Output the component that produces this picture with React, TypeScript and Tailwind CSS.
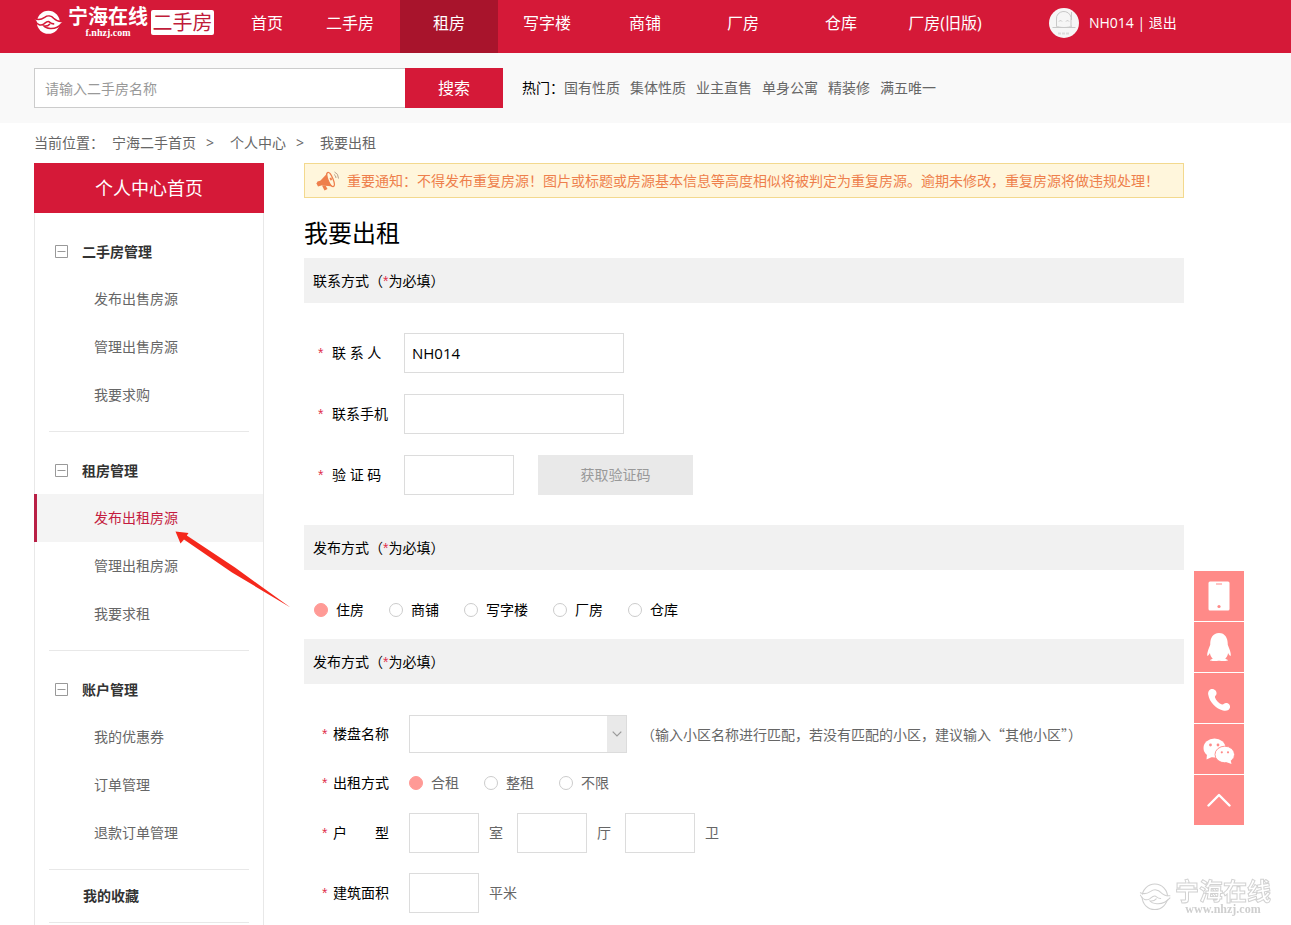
import { useState } from "react";
import type { ReactNode } from "react";
import { FaQq } from "react-icons/fa";

const NAV = [
  { label: "首页", width: "w-[66px]" },
  { label: "二手房", width: "w-[100px]" },
  { label: "租房", width: "w-[98px]", active: true },
  { label: "写字楼", width: "w-[98px]" },
  { label: "商铺", width: "w-[98px]" },
  { label: "厂房", width: "w-[98px]" },
  { label: "仓库", width: "w-[98px]" },
  { label: "厂房(旧版)", width: "w-[110px]" },
];

const HOT = ["国有性质", "集体性质", "业主直售", "单身公寓", "精装修", "满五唯一"];

const MENU = [
  { title: "二手房管理", items: ["发布出售房源", "管理出售房源", "我要求购"] },
  { title: "租房管理", items: ["发布出租房源", "管理出租房源", "我要求租"] },
  { title: "账户管理", items: ["我的优惠券", "订单管理", "退款订单管理"] },
];

const ACTIVE_ITEM = "发布出租房源";

const BOX = "h-10 border border-[#dcdcdc] bg-white px-[7px] text-[15px] text-black outline-none";

function BirdMark({ className, outline }: { className: string; outline?: boolean }) {
  const line = outline ? "#cfcfcf" : "#d51938";
  const width = outline ? 3 : 5;
  return (
    <svg viewBox="0 0 93 87" className={className} aria-hidden="true">
      <circle cx="46" cy="43" r="37" fill="#fff" stroke={outline ? line : "none"} strokeWidth="3" />
      <path d="M2 33C10 39 20 38 30 32L36 44C24 55 12 50 2 33Z" fill="#fff" />
      <path d="M91 43C84 41 76 42 68 38L56 56C70 60 82 54 91 43Z" fill="#fff" />
      <g fill="none" stroke={line} strokeWidth={width} strokeLinecap="round">
        <path d="M4 31C16 37 25 33 34 27C44 20 56 22 63 30C71 38 79 41 90 40" />
        <path d="M4 38C10 52 22 55 32 48C38 43 43 38 48 41C52 44 56 48 63 48" />
        <path d="M90 46C80 58 66 64 52 63C42 62 36 60 32 55C40 56 46 54 50 49" />
      </g>
    </svg>
  );
}

function Logo() {
  return (
    <a href="#" className="flex h-[45px] w-[180px] shrink-0 items-center text-white">
      <BirdMark className="h-[27px] w-[29px] shrink-0" />
      <span className="ml-[3px] flex w-[84px] flex-col items-center">
        <span className="text-[20px] leading-4 font-bold whitespace-nowrap">宁海在线</span>
        <span className="mt-1 font-['Liberation_Serif'] text-[10px] leading-2 font-bold">f.nhzj.com</span>
      </span>
      <span className="ml-px flex h-[25px] w-[63px] items-center justify-center rounded-xs bg-white text-[20px] leading-none whitespace-nowrap text-[#c01c3a]">
        二手房
      </span>
    </a>
  );
}

function Avatar() {
  return (
    <svg viewBox="0 0 30 30" className="size-[30px] shrink-0" aria-hidden="true">
      <circle cx="15" cy="15" r="15" fill="#f6f6f6" />
      <g fill="none" stroke="#c8c8c8" strokeWidth="1">
        <path d="M7.500 18V11A7 6.500 0 0 1 22 9.500V18" />
        <path d="M22.500 4V12" />
        <path d="M3.500 19.500H26.500" />
        <path d="M7 18C10 20 20 20 23 18" />
        <path d="M10 13.500A1.700 1.700 0 0 1 13 13.500M17 13.500A1.700 1.700 0 0 1 20 13.500" />
        <path d="M9 25.500H21" strokeWidth="2" strokeDasharray="3 1" stroke="#dcdcdc" />
      </g>
    </svg>
  );
}

function Header() {
  return (
    <header className="bg-[#d51938]">
      <div className="flex h-[53px] max-w-[1184px] pl-[34px] text-white">
        <Logo />
        <nav className="ml-5 flex shrink-0 text-base">
          {NAV.map((n) => (
            <a
              key={n.label}
              href="#"
              className={`flex items-center justify-center pb-2 whitespace-nowrap ${n.width} ${n.active ? "bg-[#a8142c]" : ""}`}
            >
              {n.label}
            </a>
          ))}
        </nav>
        <div className="ml-[49px] flex items-center pb-2 text-sm whitespace-nowrap">
          <Avatar />
          <span className="ml-2.5">
            <a href="#">NH014</a> | <a href="#">退出</a>
          </span>
        </div>
      </div>
    </header>
  );
}

function SearchBar() {
  return (
    <div className="bg-[#f9f9f9]">
      <div className="flex max-w-[1184px] items-center py-[15px] pl-[34px]">
        <form className="flex" onSubmit={(e) => e.preventDefault()}>
          <input
            aria-label="搜索"
            placeholder="请输入二手房名称"
            className="h-10 w-[371px] border border-r-0 border-[#ccc] bg-white px-2.5 text-sm outline-none placeholder:text-[#999]"
          />
          <button className="h-10 w-[98px] bg-[#d51938] text-base text-white">搜索</button>
        </form>
        <div className="ml-[19px] flex text-sm text-[#666]">
          <span className="text-black">热门：</span>
          <span className="flex gap-2.5">
            {HOT.map((h) => (
              <a key={h} href="#">{h}</a>
            ))}
          </span>
        </div>
      </div>
    </div>
  );
}

function PointerArrow() {
  return (
    <svg viewBox="0 0 116 77" className="pointer-events-none absolute top-[37px] left-[138px] z-10 h-[77px] w-[116px]" aria-hidden="true">
      <path d="M0.500 0.500L13.500 2L11.800 4.500L60 36.500L115.500 76.500L57 41.500L9 8.500L5.500 12.500Z" fill="#f5281c" />
    </svg>
  );
}

function MinusBox() {
  return (
    <svg viewBox="0 0 13 13" className="size-[13px]" aria-hidden="true">
      <path d="M0.500 0.500H12.500V12.500H0.500ZM2.500 6.500H10.500" fill="none" stroke="#999" />
    </svg>
  );
}

function Sidebar() {
  return (
    <aside className="w-[230px] shrink-0 text-sm">
      <a href="#" className="flex h-[50px] items-center justify-center bg-[#d51938] text-lg text-white">
        个人中心首页
      </a>
      <div className="border-x border-[#e8e8e8] pb-10">
        {MENU.map((g) => (
          <section key={g.title} className="pt-[15px]">
            <h2 className="flex h-[47px] items-center gap-3.5 pl-5 font-bold text-[#333]">
              <MinusBox />
              {g.title}
            </h2>
            <ul>
              {g.items.map((it) =>
                it === ACTIVE_ITEM ? (
                  <li key={it} className="relative -ml-px border-l-3 border-[#b92046] bg-[#f4f4f4]">
                    <a href="#" className="flex h-12 items-center pl-[57px] text-[#c41c40]">{it}</a>
                    <PointerArrow />
                  </li>
                ) : (
                  <li key={it}>
                    <a href="#" className="flex h-12 items-center pl-[59px] text-[#666]">{it}</a>
                  </li>
                ),
              )}
            </ul>
            <div className="mx-3.5 border-b border-[#e8e8e8] pt-3" />
          </section>
        ))}
        <a href="#" className="mx-3.5 flex h-[53px] items-center border-b border-[#e8e8e8] pl-[34px] font-bold text-[#333]">
          我的收藏
        </a>
      </div>
    </aside>
  );
}

function Megaphone() {
  return (
    <svg viewBox="0 0 24 20" className="h-5 w-6 shrink-0" aria-hidden="true">
      <g fill="#ee7f4c">
        <path d="M0.500 12.500L2 15.500L7 14L5 9.500L1.500 10.500Z" />
        <path d="M4.500 9.500L12 1.500L17.500 15.500L6.500 14.500Z" />
        <path d="M6 14.500L9.500 14.500L11.500 18L8.500 19.500Z" />
      </g>
      <ellipse cx="14.500" cy="8.500" rx="2.500" ry="7.500" transform="rotate(-23 14.500 8.500)" fill="#fff6dc" stroke="#ee7f4c" strokeWidth="1.300" />
      <path d="M13.500 7L15.500 6.500L16 9L14.500 9.500Z" fill="#ee7f4c" />
      <path d="M18 3.500Q20 4.500 20 7M18.500 1Q22.500 2.500 22.500 7.500" fill="none" stroke="#b9a08c" strokeWidth="1" />
    </svg>
  );
}

function Bar({ children }: { children: ReactNode }) {
  return (
    <h2 className="flex h-[45px] items-center bg-[#f1f1f1] pl-[9px] text-sm text-black">
      <span>
        {children}（<span className="font-['Liberation_Sans'] text-[#e0304c]">*</span>为必填）
      </span>
    </h2>
  );
}

function Radios({ name, options, tone }: { name: string; options: string[]; tone: string }) {
  const [value, setValue] = useState(options[0]);
  return (
    <div className={`flex gap-[25px] text-sm ${tone}`}>
      {options.map((o) => (
        <label key={o} className="flex items-center gap-2">
          <input
            type="radio"
            name={name}
            checked={value === o}
            onChange={() => setValue(o)}
            className="size-3.5 appearance-none rounded-full border border-[#ccc] bg-white checked:border-[#ff9a96] checked:bg-[#ff9a96]"
          />
          {o}
        </label>
      ))}
    </div>
  );
}

function Star() {
  return <span className="w-[7px] font-['Liberation_Sans'] text-[#e0304c]">*</span>;
}

function ContactRow({ id, label, children }: { id: string; label: string; children: ReactNode }) {
  return (
    <div className="flex items-center">
      <label htmlFor={id} className="flex w-[100px] gap-[7px] pl-3.5 text-sm whitespace-nowrap text-black">
        <Star />
        {label}
      </label>
      {children}
    </div>
  );
}

function HouseRow({ id, label, children }: { id?: string; label: string; children: ReactNode }) {
  const cls = "flex w-[105px] gap-1 pl-[18px] text-sm whitespace-nowrap text-black";
  const body = (
    <>
      <Star />
      {label}
    </>
  );
  return (
    <div className="flex items-center text-sm text-[#666]">
      {id ? <label htmlFor={id} className={cls}>{body}</label> : <span className={cls}>{body}</span>}
      {children}
    </div>
  );
}

function RentForm() {
  return (
    <main className="min-w-0 flex-1">
      <div className="flex h-[35px] items-center gap-[7px] border border-[#f3d98e] bg-[#fff6dc] pl-[11px] text-sm whitespace-nowrap text-[#ee7f4c]">
        <Megaphone />
        重要通知：不得发布重复房源！图片或标题或房源基本信息等高度相似将被判定为重复房源。逾期未修改，重复房源将做违规处理！
      </div>
      <h1 className="flex h-[60px] items-center pt-2.5 text-2xl text-black">我要出租</h1>
      <form onSubmit={(e) => e.preventDefault()}>
        <Bar>联系方式</Bar>
        <div className="flex flex-col gap-[21px] py-[30px]">
          <ContactRow id="contact" label="联 系 人">
            <input id="contact" defaultValue="NH014" className={`w-[220px] ${BOX}`} />
          </ContactRow>
          <ContactRow id="phone" label="联系手机">
            <input id="phone" className={`w-[220px] ${BOX}`} />
          </ContactRow>
          <ContactRow id="code" label="验 证 码">
            <input id="code" className={`w-[110px] ${BOX}`} />
            <button type="button" className="ml-6 h-10 w-[155px] bg-[#e9e9e9] text-sm text-[#999]">
              获取验证码
            </button>
          </ContactRow>
        </div>
        <Bar>发布方式</Bar>
        <div className="flex h-[69px] items-center pt-2.5 pl-2.5">
          <Radios name="kind" options={["住房", "商铺", "写字楼", "厂房", "仓库"]} tone="text-black" />
        </div>
        <Bar>发布方式</Bar>
        <div className="flex flex-col gap-5 pt-[31px] pb-10">
          <HouseRow id="estate" label="楼盘名称">
            <div className="flex h-[38px] w-[218px] border border-[#dcdcdc]">
              <input id="estate" className="min-w-0 flex-1 bg-white px-2 text-sm text-black outline-none" />
              <button type="button" aria-label="展开" className="flex w-[19px] items-center justify-center bg-[#e9e9e9]">
                <svg viewBox="0 0 10 6" className="h-1.5 w-2.5" aria-hidden="true">
                  <path d="M0.700 0.700L5 5L9.300 0.700" fill="none" stroke="#999" strokeWidth="1.200" />
                </svg>
              </button>
            </div>
            <span className="ml-3.5 font-['Noto_Sans_CJK_SC',sans-serif]">
              （输入小区名称进行匹配，若没有匹配的小区，建议输入“其他小区”）
            </span>
          </HouseRow>
          <HouseRow label="出租方式">
            <Radios name="mode" options={["合租", "整租", "不限"]} tone="text-[#666]" />
          </HouseRow>
          <HouseRow id="rooms" label="户　　型">
            <div className="flex gap-3.5">
              {["室", "厅", "卫"].map((u, i) => (
                <span key={u} className="flex items-center gap-2.5">
                  <input id={i === 0 ? "rooms" : undefined} aria-label={u} className={`w-[70px] ${BOX}`} />
                  {u}
                </span>
              ))}
            </div>
          </HouseRow>
          <HouseRow id="area" label="建筑面积">
            <span className="flex items-center gap-2.5">
              <input id="area" className={`w-[70px] ${BOX}`} />
              平米
            </span>
          </HouseRow>
        </div>
      </form>
    </main>
  );
}

function PhoneIcon() {
  return (
    <svg viewBox="0 0 22 30" className="h-[30px] w-[22px]" aria-hidden="true">
      <rect x="0.500" y="0.500" width="21" height="29" rx="1.500" fill="#fff" />
      <path d="M8 3H14" stroke="#ff8a88" strokeWidth="1" />
      <circle cx="11" cy="25.500" r="1.600" fill="#ff8a88" />
    </svg>
  );
}

function HandsetIcon() {
  return (
    <svg viewBox="0 0 24 24" className="mt-1 size-6" aria-hidden="true">
      <path
        d="M5 1C8 1 10 3.500 9.500 6C9.200 7.500 7.500 7.800 8 9.500C9 12.500 12 15.500 15 16.500C16.500 17 17 15 19 15C21.500 15 23.500 17 23 19.500C22.500 22 19.500 23.500 16 22.500C8.500 20.500 2.500 14 1.200 6.500C0.700 3.500 2.500 1 5 1Z"
        fill="#fff"
      />
    </svg>
  );
}

function ChatIcon() {
  return (
    <svg viewBox="0 0 32 26" className="mt-1 h-[26px] w-8" aria-hidden="true">
      <ellipse cx="11.500" cy="10" rx="11" ry="9.500" fill="#fff" />
      <path d="M4 16L3.500 21.500L10 18.500Z" fill="#fff" />
      <ellipse cx="21.800" cy="16.500" rx="9.800" ry="8.300" fill="#fff" stroke="#ff8a88" strokeWidth="0.900" />
      <path d="M23 24L28.500 26L27.500 21.500Z" fill="#fff" />
      <g fill="#ff8a88">
        <circle cx="7.500" cy="7" r="1.400" />
        <circle cx="15" cy="7" r="1.400" />
        <circle cx="18.800" cy="14.300" r="1.100" />
        <circle cx="25" cy="14.300" r="1.100" />
      </g>
    </svg>
  );
}

function FloatBar() {
  const tools = [
    { label: "手机版", icon: <PhoneIcon /> },
    { label: "QQ", icon: <FaQq className="size-7" /> },
    { label: "电话", icon: <HandsetIcon /> },
    { label: "微信", icon: <ChatIcon /> },
    {
      label: "返回顶部",
      icon: (
        <svg viewBox="0 0 24 14" className="h-3.5 w-6" aria-hidden="true">
          <path d="M1.500 12.500L12 2L22.500 12.500" fill="none" stroke="#fff" strokeWidth="2.400" strokeLinecap="round" strokeLinejoin="round" />
        </svg>
      ),
    },
  ];
  return (
    <div className="fixed right-[47px] bottom-[100px] flex flex-col gap-px">
      {tools.map((t) => (
        <button key={t.label} aria-label={t.label} className="flex size-[50px] items-center justify-center bg-[#ff8a88] text-white">
          {t.icon}
        </button>
      ))}
    </div>
  );
}

function Watermark() {
  return (
    <div className="pointer-events-none fixed right-5 bottom-3 flex items-center gap-1 text-white">
      <BirdMark className="h-[30px] w-8" outline />
      <span className="flex flex-col items-center">
        <span className="text-2xl leading-5 font-bold whitespace-nowrap [-webkit-text-stroke:1px_#d2d2d2]">宁海在线</span>
        <span className="mt-1 font-['Liberation_Serif'] text-[12px] leading-2 font-bold text-[#cfcfcf]">www.nhzj.com</span>
      </span>
    </div>
  );
}

export default function App() {
  return (
    <div className="relative h-screen overflow-hidden bg-white font-['Open_Sans','Noto_Sans_CJK_SC',sans-serif]">
      <Header />
      <SearchBar />
      <nav aria-label="当前位置" className="flex h-10 items-center pl-[34px] text-sm text-[#666]">
        <span>当前位置：</span>
        <a href="#" className="ml-2">宁海二手首页</a>
        <span className="ml-2.5">&gt;</span>
        <a href="#" className="ml-4">个人中心</a>
        <span className="ml-2.5">&gt;</span>
        <a href="#" className="ml-4">我要出租</a>
      </nav>
      <div className="flex max-w-[1184px] gap-10 pl-[34px]">
        <Sidebar />
        <RentForm />
      </div>
      <FloatBar />
      <Watermark />
    </div>
  );
}
